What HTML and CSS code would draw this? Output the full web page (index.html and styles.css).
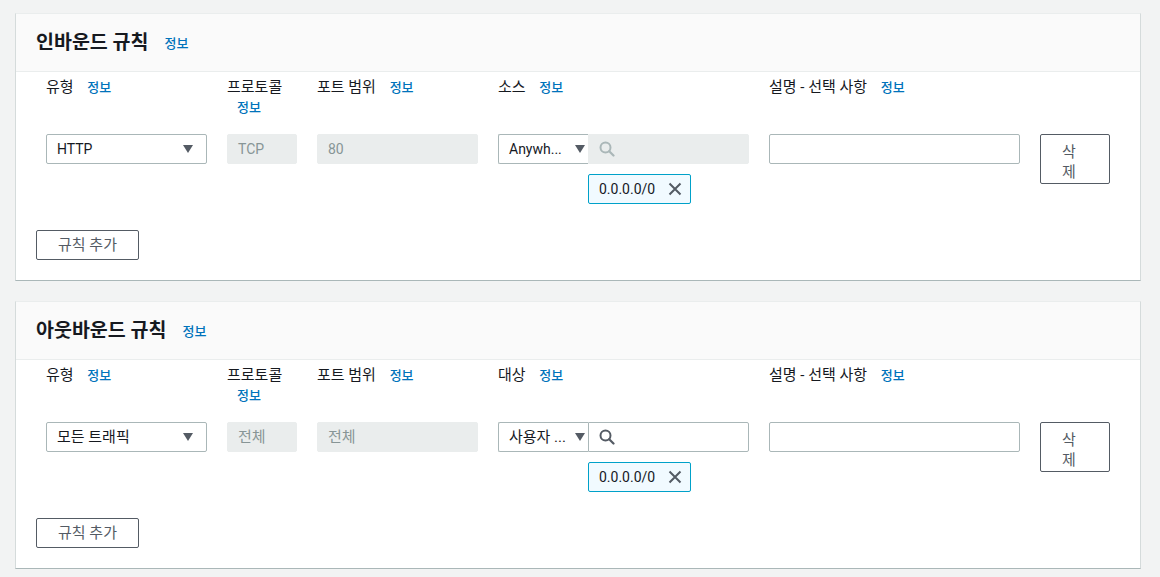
FILE: index.html
```html
<!DOCTYPE html>
<html lang="ko">
<head>
<meta charset="utf-8">
<title>보안 그룹 규칙</title>
<link rel="stylesheet" href="styles.css">
</head>
<body>
<main class="page">
  <section class="card">
    <header class="card-head">
      <h2 class="card-title">인바운드 규칙</h2><a class="info" href="#">정보</a>
    </header>
    <div class="card-body">
      <div class="rules">
        <div class="lbl">유형 <a class="info" href="#">정보</a></div>
        <div class="lbl">프로토콜 <a class="info" href="#">정보</a></div>
        <div class="lbl">포트 범위 <a class="info" href="#">정보</a></div>
        <div class="lbl">소스 <a class="info" href="#">정보</a></div>
        <div class="lbl">설명 - 선택 사항 <a class="info" href="#">정보</a></div>
        <div class="lbl"></div>

        <div class="field select"><span class="val lat">HTTP</span><span class="caret"></span></div>
        <div class="field disabled"><span class="lat">TCP</span></div>
        <div class="field disabled"><span class="lat">80</span></div>
        <div class="source">
          <div class="src-row">
            <div class="field select src-sel"><span class="val lat">Anywh...</span><span class="caret"></span></div>
            <div class="field search disabled">
              <svg class="mag" width="16" height="16" viewBox="0 0 16 16"><circle cx="6.5" cy="6.5" r="5" fill="none" stroke="currentColor" stroke-width="2"/><line x1="10.2" y1="10.2" x2="14.5" y2="14.5" stroke="currentColor" stroke-width="2.2" stroke-linecap="round"/></svg>
            </div>
          </div>
          <div class="token"><span class="lat">0.0.0.0/0</span>
            <svg class="x" width="14" height="14" viewBox="0 0 14 14"><path d="M1.5 1.5 L12.5 12.5 M12.5 1.5 L1.5 12.5" stroke="currentColor" stroke-width="2" fill="none"/></svg>
          </div>
        </div>
        <div class="field"></div>
        <button class="btn del" type="button">삭제</button>
      </div>
      <button class="btn add" type="button">규칙 추가</button>
    </div>
  </section>

  <section class="card">
    <header class="card-head">
      <h2 class="card-title">아웃바운드 규칙</h2><a class="info" href="#">정보</a>
    </header>
    <div class="card-body">
      <div class="rules">
        <div class="lbl">유형 <a class="info" href="#">정보</a></div>
        <div class="lbl">프로토콜 <a class="info" href="#">정보</a></div>
        <div class="lbl">포트 범위 <a class="info" href="#">정보</a></div>
        <div class="lbl">대상 <a class="info" href="#">정보</a></div>
        <div class="lbl">설명 - 선택 사항 <a class="info" href="#">정보</a></div>
        <div class="lbl"></div>

        <div class="field select"><span class="val">모든 트래픽</span><span class="caret"></span></div>
        <div class="field disabled">전체</div>
        <div class="field disabled">전체</div>
        <div class="source">
          <div class="src-row">
            <div class="field select src-sel"><span class="val">사용자 ...</span><span class="caret"></span></div>
            <div class="field search">
              <svg class="mag" width="16" height="16" viewBox="0 0 16 16"><circle cx="6.5" cy="6.5" r="5" fill="none" stroke="currentColor" stroke-width="2"/><line x1="10.2" y1="10.2" x2="14.5" y2="14.5" stroke="currentColor" stroke-width="2.2" stroke-linecap="round"/></svg>
            </div>
          </div>
          <div class="token"><span class="lat">0.0.0.0/0</span>
            <svg class="x" width="14" height="14" viewBox="0 0 14 14"><path d="M1.5 1.5 L12.5 12.5 M12.5 1.5 L1.5 12.5" stroke="currentColor" stroke-width="2" fill="none"/></svg>
          </div>
        </div>
        <div class="field"></div>
        <button class="btn del" type="button">삭제</button>
      </div>
      <button class="btn add" type="button">규칙 추가</button>
    </div>
  </section>
</main>
</body>
</html>
```

FILE: styles.css
```css
* { box-sizing: border-box; }
html, body { margin: 0; padding: 0; }
body {
  background: #f2f3f3;
  font-family: Roboto, "Noto Sans CJK KR", sans-serif;
  font-size: 15px;
  line-height: 20px;
  color: #16191f;
}
.lat { font-size: 14px; }
.page {
  width: 1126px;
  margin: 13px 0 0 15px;
  display: flex;
  flex-direction: column;
  gap: 20px;
}
.card {
  background: #fff;
  border-top: 1px solid #eaeded;
  border-left: 1px solid #d5dbdb;
  border-right: 1px solid #d5dbdb;
  border-bottom: 1px solid #aab7b8;
}
.card-head {
  height: 58px;
  display: flex;
  align-items: center;
  padding: 0 20px 0;
  background: #fafafa;
  border-bottom: 1px solid #eaeded;
}
.card-title {
  margin: 0;
  font-size: 19.5px;
  line-height: 22px;
  font-weight: 700;
}
.info {
  color: #0073bb;
  font-size: 13px;
  font-weight: 500;
  line-height: 20px;
  text-decoration: none;
  margin-left: 10px;
}
.card-head .info { margin-left: 16px; margin-top: 2px; }
.card-body {
  padding: 5px 20px 20px;
}
.rules {
  margin-left: 10px;
  display: grid;
  grid-template-columns: 161px 70px 161px 251px 251px 70px;
  grid-template-rows: 40px auto;
  column-gap: 20px;
  row-gap: 17px;
  align-items: start;
}
.lbl { height: 40px; }
.field {
  height: 30px;
  border: 1px solid #aab7b8;
  border-radius: 2px;
  padding: 0 10px;
  display: flex;
  align-items: center;
  background: #fff;
  white-space: nowrap;
}
.field.disabled {
  background: #eaeded;
  border-color: #eaeded;
  color: #879596;
}
.select { justify-content: space-between; padding-right: 13px; }
.caret {
  width: 0; height: 0;
  border-left: 5px solid transparent;
  border-right: 5px solid transparent;
  border-top: 8px solid #545b64;
}
.source { display: flex; flex-direction: column; }
.src-row { display: flex; }
.src-sel {
  width: 90px;
  border-right: none;
  border-radius: 2px 0 0 2px;
  padding-right: 3px;
}
.search {
  width: 161px;
  border-radius: 0 2px 2px 0;
  color: #545b64;
}
.search.disabled { color: #aab7b8; }
.mag { display: block; }
.token {
  margin: 10px 0 0 90px;
  width: 103px;
  height: 30px;
  border: 1px solid #00a1c9;
  border-radius: 2px;
  background: #f1faff;
  display: flex;
  align-items: center;
  justify-content: space-between;
  padding: 0 8px 0 10px;
  color: #16191f;
}
.token .x { color: #545b64; display: block; }
.btn {
  font-family: inherit;
  font-size: 15px;
  line-height: 20px;
  color: #545b64;
  background: #fff;
  border: 1px solid #545b64;
  border-radius: 2px;
  cursor: pointer;
}
.del {
  width: 70px;
  height: 50px;
  padding: 5px 21px 0;
  text-align: left;
  display: block;
}
.add {
  display: block;
  margin-top: 26px;
  width: 103px;
  height: 30px;
  padding: 0;
  text-align: center;
}
```
